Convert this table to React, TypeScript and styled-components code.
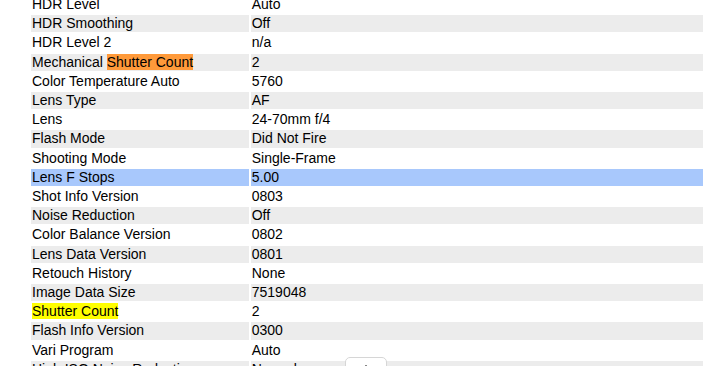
import React from "react";
import styled, { createGlobalStyle } from "styled-components";

//Global
const GlobalStyle = createGlobalStyle`
  html, body {
    margin: 0;
    padding: 0;
    background: #ffffff;
    overflow: hidden;
  }
  body {
    font-family: "Liberation Sans", Arial, sans-serif;
    font-size: 14px;
    color: #000;
  }
`;

//Styled Components
const Page = styled.div`
  height: 366px;
  overflow: hidden;
  padding-left: 29px;
`;

const ExifTable = styled.table`
  width: 676px;
  margin-top: -6px;
  border-collapse: separate;
  border-spacing: 2px;
  font-size: 14px;
  line-height: 15.2px;
`;

const Row = styled.tr<{ $stripe: boolean; $selected?: boolean }>`
  background: ${(p) => (p.$selected ? "#a8c8fc" : p.$stripe ? "#ececec" : "transparent")};
`;

const Cell = styled.td<{ $wide?: boolean }>`
  padding: 1px 1px;
  height: 15.2px;
  width: ${(p) => (p.$wide ? "452px" : "216px")};
  vertical-align: middle;
  white-space: nowrap;
`;

const Mark = styled.span<{ $tone: "orange" | "yellow" }>`
  background: ${(p) => (p.$tone === "orange" ? "#ff9a3a" : "#ffff00")};
`;

const FloatButton = styled.button`
  position: fixed;
  left: 345px;
  top: 357px;
  width: 42px;
  height: 30px;
  padding: 0;
  border: 1px solid #d6d6d6;
  border-radius: 5px;
  background: #ffffff;
  display: flex;
  justify-content: center;
  align-items: flex-start;
  padding-top: 7px;
`;

type Entry = { name: React.ReactNode; value: string; selected?: boolean };

const rows: Entry[] = [
  { name: "HDR Level", value: "Auto" },
  { name: "HDR Smoothing", value: "Off" },
  { name: "HDR Level 2", value: "n/a" },
  {
    name: (
      <>
        Mechanical <Mark $tone="orange">Shutter Count</Mark>
      </>
    ),
    value: "2",
  },
  { name: "Color Temperature Auto", value: "5760" },
  { name: "Lens Type", value: "AF" },
  { name: "Lens", value: "24-70mm f/4" },
  { name: "Flash Mode", value: "Did Not Fire" },
  { name: "Shooting Mode", value: "Single-Frame" },
  { name: "Lens F Stops", value: "5.00", selected: true },
  { name: "Shot Info Version", value: "0803" },
  { name: "Noise Reduction", value: "Off" },
  { name: "Color Balance Version", value: "0802" },
  { name: "Lens Data Version", value: "0801" },
  { name: "Retouch History", value: "None" },
  { name: "Image Data Size", value: "7519048" },
  { name: <Mark $tone="yellow">Shutter Count</Mark>, value: "2" },
  { name: "Flash Info Version", value: "0300" },
  { name: "Vari Program", value: "Auto" },
  { name: "High ISO Noise Reduction", value: "Normal" },
];

const App: React.FC = () => {
  return (
    <>
      <GlobalStyle />
      <Page>
        <ExifTable>
          <tbody>
            {rows.map((r, i) => (
              <Row key={i} $stripe={i % 2 === 1} $selected={r.selected}>
                <Cell>{r.name}</Cell>
                <Cell $wide>{r.value}</Cell>
              </Row>
            ))}
          </tbody>
        </ExifTable>
      </Page>
      <FloatButton aria-label="Scroll to top">
        <svg width="10" height="6" viewBox="0 0 10 6">
          <path d="M1 5 L5 1 L9 5" fill="none" stroke="#444" strokeWidth="1.6" />
        </svg>
      </FloatButton>
    </>
  );
};

export default App;
